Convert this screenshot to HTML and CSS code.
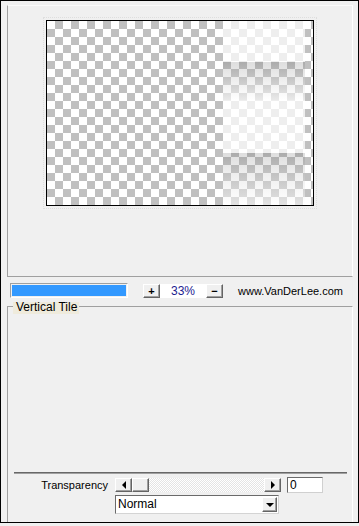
FILE: index.html
```html
<!DOCTYPE html>
<html>
<head>
<meta charset="utf-8">
<link rel="stylesheet" href="styles.css">
</head>
<body>
<div class="window">
  <div class="preview-panel">
    <div class="preview">
      <div class="overlay">
        <div class="band light b1"></div>
        <div class="band dark b2"></div>
        <div class="band light b3"></div>
        <div class="band dark b4"></div>
      </div>
    </div>
  </div>
  <div class="toolbar">
    <div class="progress"><div class="progress-fill"></div></div>
    <div class="btn zoom-btn zoom-plus">+</div>
    <div class="zoom-value">33%</div>
    <div class="btn zoom-btn">&minus;</div>
    <span class="site">www.VanDerLee.com</span>
  </div>
  <div class="group">
    <span class="group-label">Vertical Tile</span>
    <div class="separator"></div>
    <div class="slider-row">
      <span class="slider-label">Transparency</span>
      <div class="scrollbar">
        <div class="btn sb-btn"><span class="arrow-left"></span></div>
        <div class="btn sb-thumb"></div>
        <div class="sb-track"></div>
        <div class="btn sb-btn"><span class="arrow-right"></span></div>
      </div>
      <div class="num-input">0</div>
    </div>
    <div class="select">
      <span class="select-text">Normal</span>
      <div class="btn select-btn"><span class="arrow-down"></span></div>
    </div>
  </div>
</div>
</body>
</html>
```
FILE: styles.css
```css
html, body {
  margin: 0;
  padding: 0;
  background: #f0f0f0;
}
body {
  width: 359px;
  height: 526px;
  font-family: "Liberation Sans", Arial, sans-serif;
  font-size: 11px;
  color: #000;
}
.window {
  width: 359px;
  height: 523px;
  box-sizing: border-box;
  border: 1px solid #000;
  padding: 4px 5px 0 6px;
  display: flex;
  flex-direction: column;
}
.preview-panel {
  height: 272px;
  box-sizing: border-box;
  border-left: 1px solid #a0a0a0;
  border-top: 1px solid #fbfbfb;
  border-right: 1px solid #ffffff;
  border-bottom: 1px solid #a0a0a0;
  padding: 14px 0 0 38px;
}
.preview {
  position: relative;
  width: 268px;
  height: 186px;
  box-sizing: border-box;
  border: 1px solid #000;
  outline: 1px dotted #dedede;
  outline-offset: 2px;
  background: repeating-conic-gradient(#c0c0c0 0 25%, #ffffff 0 50%) 0 0 / 16px 16px;
}
.overlay {
  position: absolute;
  left: 176px;
  top: 0;
  width: 82px;
  height: 184px;
  display: flex;
  flex-direction: column;
}
.band.light {
  background: rgba(255, 255, 255, 0.72);
}
.b1 { height: 41px; }
.b2 {
  height: 38px;
  background: linear-gradient(to bottom, rgba(90, 90, 90, 0.2), rgba(200, 200, 200, 0.35) 40%, rgba(255, 255, 255, 0.65));
}
.b3 { height: 53px; }
.b4 {
  height: 52px;
  background: linear-gradient(to bottom, rgba(90, 90, 90, 0.2), rgba(200, 200, 200, 0.3) 40%, rgba(255, 255, 255, 0.55));
}
.toolbar {
  margin-top: 6px;
  height: 15px;
  display: flex;
  align-items: center;
}
.progress {
  margin-left: 3px;
  width: 118px;
  height: 15px;
  box-sizing: border-box;
  border: 1px solid;
  border-color: #a0a0a0 #ffffff #ffffff #a0a0a0;
  padding: 1px;
}
.progress-fill {
  width: 100%;
  height: 100%;
  background: #3399ff;
}
.btn {
  box-sizing: border-box;
  background: #f0f0f0;
  border: 1px solid;
  border-color: #ffffff #646464 #646464 #ffffff;
  box-shadow: inset -1px -1px 0 #a0a0a0;
  display: flex;
  align-items: center;
  justify-content: center;
}
.zoom-btn {
  width: 17px;
  height: 14px;
  font-weight: bold;
  font-size: 11px;
  line-height: 12px;
}
.zoom-plus {
  margin-left: 15px;
}
.zoom-value {
  width: 46px;
  height: 14px;
  background: #ffffff;
  color: #1c2290;
  text-align: center;
  line-height: 14px;
  font-size: 12px;
}
.site {
  margin-left: 15px;
  line-height: 14px;
}
.group {
  position: relative;
  margin-top: 8px;
  flex: 1;
  border-top: 1px solid #a0a0a0;
  border-left: 1px solid #a0a0a0;
  border-right: 1px solid #ffffff;
  display: flex;
  flex-direction: column;
}
.group-label {
  position: absolute;
  top: -5px;
  left: 5px;
  padding: 0 2px 0 3px;
  height: 12px;
  line-height: 11px;
  background: #efebdc;
  font-size: 12px;
}
.separator {
  margin: 165px 0 0 6px;
  width: 333px;
  height: 1px;
  border-bottom: 1px solid #a0a0a0;
  background: #686868;
}
.slider-row {
  margin-top: 3px;
  height: 16px;
  display: flex;
  align-items: center;
}
.slider-label {
  width: 107px;
  box-sizing: border-box;
  padding-right: 7px;
  text-align: right;
  font-size: 11px;
}
.scrollbar {
  width: 166px;
  height: 14px;
  display: flex;
}
.sb-btn {
  width: 17px;
  height: 14px;
}
.sb-thumb {
  width: 17px;
  height: 14px;
}
.sb-track {
  flex: 1;
  background: repeating-conic-gradient(#ffffff 0 25%, #e4e4e4 0 50%) 0 0 / 2px 2px;
}
.arrow-left {
  width: 0;
  height: 0;
  border-top: 4px solid transparent;
  border-bottom: 4px solid transparent;
  border-right: 4px solid #000;
}
.arrow-right {
  width: 0;
  height: 0;
  border-top: 4px solid transparent;
  border-bottom: 4px solid transparent;
  border-left: 4px solid #000;
}
.num-input {
  margin-left: 6px;
  width: 36px;
  height: 16px;
  box-sizing: border-box;
  background: #ffffff;
  border: 1px solid;
  border-color: #6a6a6a #d0d0d0 #d0d0d0 #6a6a6a;
  padding-left: 2px;
  line-height: 14px;
  font-size: 12px;
}
.select {
  margin: 2px 0 0 107px;
  width: 164px;
  height: 19px;
  box-sizing: border-box;
  background: #ffffff;
  border: 1px solid;
  border-color: #6a6a6a #d4d4d4 #d4d4d4 #6a6a6a;
  padding: 1px 1px 1px 2px;
  display: flex;
  align-items: center;
  justify-content: space-between;
}
.select-text {
  font-size: 12px;
  line-height: 15px;
}
.select-btn {
  width: 15px;
  height: 15px;
}
.arrow-down {
  width: 0;
  height: 0;
  border-left: 4px solid transparent;
  border-right: 4px solid transparent;
  border-top: 4px solid #000;
}
```
